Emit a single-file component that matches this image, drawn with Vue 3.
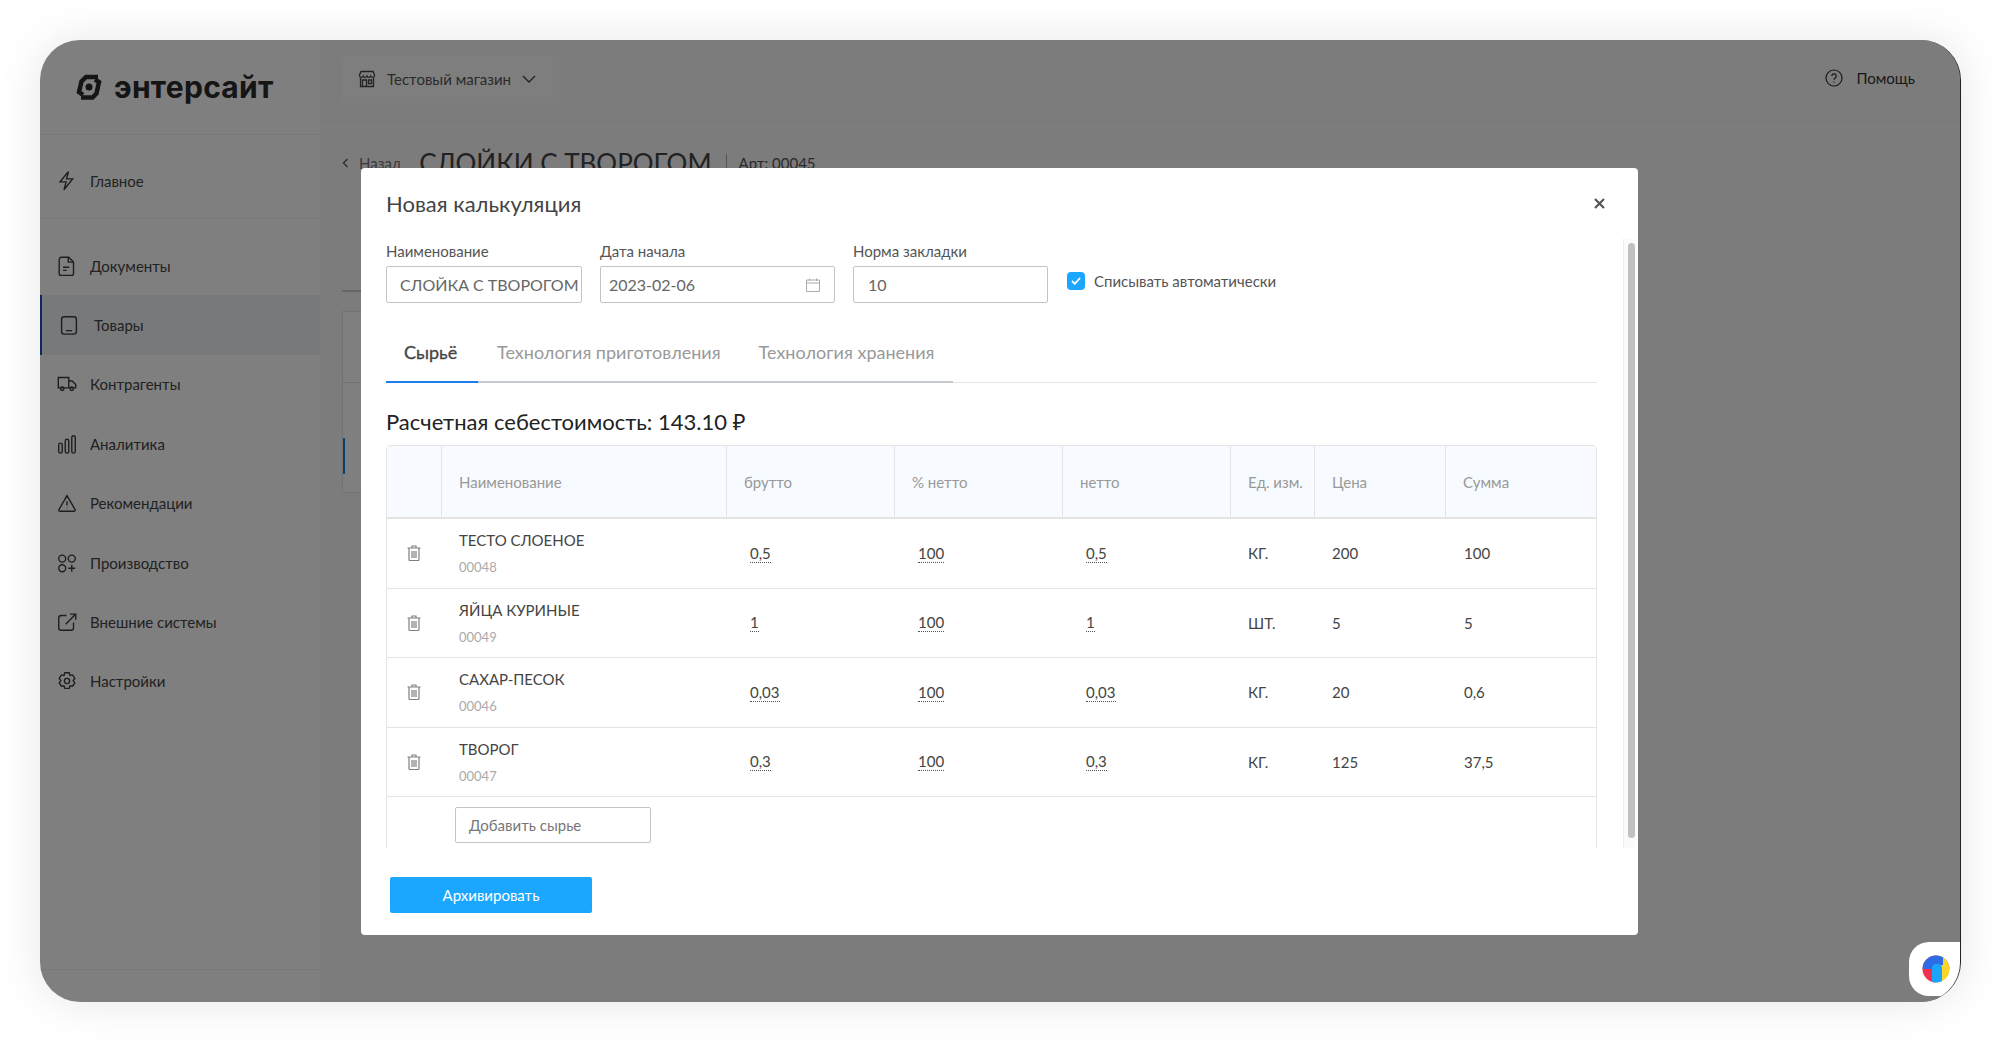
<script setup>
const menu = [
  { name: 'Главное', icon: 'bolt', group: 'first' },
  { name: 'Документы', icon: 'doc' },
  { name: 'Товары', icon: 'goods', active: true },
  { name: 'Контрагенты', icon: 'truck' },
  { name: 'Аналитика', icon: 'bars' },
  { name: 'Рекомендации', icon: 'warn' },
  { name: 'Производство', icon: 'prod' },
  { name: 'Внешние системы', icon: 'ext' },
  { name: 'Настройки', icon: 'gear' },
];

const icons = {
  bolt: 'M12.5 1.5 3.5 12.5h7l-2.5 9 10-12.5h-7l2-7.5z',
  doc: 'M5 1.5h8.5l5.5 5.5v13a2.5 2.5 0 0 1-2.500 2.500H5A2.500 2.500 0 0 1 2.500 20V4A2.500 2.500 0 0 1 5 1.500zM13 1.500V7h6M7 13h7M7 16.500h4',
  goods: 'M6 2h11a3 3 0 0 1 3 3v14a3 3 0 0 1-3 3H6a3 3 0 0 1-3-3V5a3 3 0 0 1 3-3zM8 18h7',
  truck: 'M1.500 4h12v12h-12zM13.500 8h4l4 4v4h-8M6 19a2 2 0 1 0 0-4 2 2 0 0 0 0 4zM17 19a2 2 0 1 0 0-4 2 2 0 0 0 0 4z',
  bars: 'M2 12.500a2 2 0 0 1 4 0V20a2 2 0 0 1-4 0zM9.500 8a2 2 0 0 1 4 0v12a2 2 0 0 1-4 0zM17 4a2 2 0 0 1 4 0v16a2 2 0 0 1-4 0z',
  warn: 'M11.500 3 2 19.500a1.500 1.500 0 0 0 1.300 1.500h16.400a1.500 1.500 0 0 0 1.300-1.500L11.500 3zM11.500 9.500v5M11.500 17v.5',
  prod: 'M6 2.500a4 4 0 1 0 0 8 4 4 0 0 0 0-8zM17 2.500a4 4 0 1 0 0 8 4 4 0 0 0 0-8zM6 13.500a4 4 0 1 0 0 8 4 4 0 0 0 0-8zM17 13.500v8M13 17.500h8',
  ext: 'M11 4H5a3 3 0 0 0-3 3v11a3 3 0 0 0 3 3h11a3 3 0 0 0 3-3v-6M10 14 21 3M15 2.500h6.500V9',
  gear: 'M9 2h5l1 3 3-.5 2.500 4-2 2.500 2 2.500-2.500 4-3-.5-1 3H9l-1-3-3 .5-2.500-4 2-2.500-2-2.500 2.500-4 3 .5zM11.500 8.500a3 3 0 1 0 0 6 3 3 0 0 0 0-6z',
};

const columns = ['', 'Наименование', 'брутто', '% нетто', 'нетто', 'Ед. изм.', 'Цена', 'Сумма'];

const rows = [
  { name: 'ТЕСТО СЛОЕНОЕ', code: '00048', brutto: '0,5', percent: '100', netto: '0,5', unit: 'КГ.', price: '200', sum: '100' },
  { name: 'ЯЙЦА КУРИНЫЕ', code: '00049', brutto: '1', percent: '100', netto: '1', unit: 'ШТ.', price: '5', sum: '5' },
  { name: 'САХАР-ПЕСОК', code: '00046', brutto: '0,03', percent: '100', netto: '0,03', unit: 'КГ.', price: '20', sum: '0,6' },
  { name: 'ТВОРОГ', code: '00047', brutto: '0,3', percent: '100', netto: '0,3', unit: 'КГ.', price: '125', sum: '37,5' },
];
</script>

<template>
  <div class="window">
    <aside class="sidebar">
      <div class="logo">
        <svg width="28" height="28" viewBox="0 0 28 28" fill="none">
          <path d="M23 4H11L6.500 8.500 4 19l4 3" stroke="#2b2b2b" stroke-width="4.500" />
          <path d="M6 24.500h11.500l4-4L24 9l-4-2.500" stroke="#2b2b2b" stroke-width="4.500" />
          <circle cx="14" cy="14" r="3.500" fill="#2b2b2b" />
        </svg>
        <span>энтерсайт</span>
      </div>
      <nav class="menu">
        <a v-for="item in menu" :key="item.name" class="menu-item" :class="{ active: item.active, first: item.group }">
          <svg width="20" height="20" viewBox="0 0 23 23" fill="none" stroke="#3c3c3c" stroke-width="1.600">
            <path :d="icons[item.icon]" />
          </svg>
          <span>{{ item.name }}</span>
        </a>
      </nav>
      <div class="side-foot"></div>
    </aside>

    <main class="main">
      <header class="top">
        <div class="shop">
          <svg width="18" height="18" viewBox="0 0 18 18" fill="none" stroke="#444" stroke-width="1.300">
            <path d="M2.500 7v9.500h13V7M1.500 5l1.500-3.500h12L16.500 5v1a2 2 0 0 1-3.750 0 2 2 0 0 1-3.750 0 2 2 0 0 1-3.750 0 2 2 0 0 1-3.750 0zM4.500 10h4v6.500h-4zM10.500 10h3v3.500h-3z" />
          </svg>
          <span>Тестовый магазин</span>
          <svg width="14" height="8" viewBox="0 0 14 8" fill="none" stroke="#444" stroke-width="1.400"><path d="m1 1 6 6 6-6" /></svg>
        </div>
        <div class="help">
          <svg width="18" height="18" viewBox="0 0 18 18" fill="none" stroke="#333" stroke-width="1.200">
            <circle cx="9" cy="9" r="8" />
            <path d="M6.800 7a2.200 2.200 0 1 1 3.400 1.900c-.8.500-1.200 1-1.200 1.900M9 12.600v.8" />
          </svg>
          <span>Помощь</span>
        </div>
      </header>
      <div class="content">
        <div class="crumbs">
          <svg width="7" height="10" viewBox="0 0 7 10" fill="none" stroke="#555" stroke-width="1.300"><path d="M5.500 1 1.500 5l4 4" /></svg>
          <span class="back">Назад</span>
          <span class="page-title">СЛОЙКИ С ТВОРОГОМ</span>
          <span class="art">Арт: 00045</span>
        </div>
        <div class="page-rule"></div>
        <div class="page-card">
          <div class="page-row"></div>
          <div class="page-row selected"><i></i></div>
        </div>
      </div>
    </main>

    <div class="overlay">
      <section class="modal">
        <div class="modal-head">
          <h2>Новая калькуляция</h2>
          <svg width="11" height="11" viewBox="0 0 11 11" fill="none" stroke="#555" stroke-width="2.200"><path d="m1 1 9 9M10 1l-9 9" /></svg>
        </div>
        <div class="modal-body">
          <div class="scroll">
            <div class="form">
              <label class="field name">
                <span>Наименование</span>
                <div class="input center">СЛОЙКА С ТВОРОГОМ</div>
              </label>
              <label class="field date">
                <span>Дата начала</span>
                <div class="input">
                  2023-02-06
                  <svg width="16" height="14" viewBox="0 0 16 14" fill="none" stroke="#aaa" stroke-width="1"><path d="M1.500 2h13v11.500h-13zM1.500 5h13M4.500 .5v2.500M11.500 .5v2.500" /></svg>
                </div>
              </label>
              <label class="field norm">
                <span>Норма закладки</span>
                <div class="input">10</div>
              </label>
              <div class="check">
                <i>
                  <svg width="10" height="8" viewBox="0 0 10 8" fill="none" stroke="#fff" stroke-width="1.800"><path d="m1 4 2.800 2.800L9 1" /></svg>
                </i>
                <span>Списывать автоматически</span>
              </div>
            </div>

            <div class="tabs">
              <span class="tab active">Сырьё</span>
              <span class="tab">Технология приготовления</span>
              <span class="tab">Технология хранения</span>
            </div>

            <div class="cost">Расчетная себестоимость: 143.10 ₽</div>

            <div class="grid">
              <div class="row head">
                <div v-for="col in columns" :key="col" class="cell" :class="{ narrow: col === 'Ед. изм.' }">{{ col }}</div>
              </div>
              <div v-for="row in rows" :key="row.code" class="row">
                <div class="cell trash">
                  <svg width="14" height="16" viewBox="0 0 14 16" fill="none" stroke="#808080" stroke-width="1.200">
                    <path d="M.5 3h13M5 3V1h4v2M2 3v11.500A1 1 0 0 0 3 15.500h8a1 1 0 0 0 1-1V3M5 6v7M7 6v7M9 6v7" />
                  </svg>
                </div>
                <div class="cell title">
                  <span>{{ row.name }}</span>
                  <small>{{ row.code }}</small>
                </div>
                <div class="cell"><span class="edit">{{ row.brutto }}</span></div>
                <div class="cell"><span class="edit">{{ row.percent }}</span></div>
                <div class="cell"><span class="edit">{{ row.netto }}</span></div>
                <div class="cell">{{ row.unit }}</div>
                <div class="cell">{{ row.price }}</div>
                <div class="cell">{{ row.sum }}</div>
              </div>
              <div class="add">
                <div class="add-input">Добавить сырье</div>
              </div>
            </div>
          </div>
          <div class="scrollbar"><i></i></div>
        </div>
        <div class="modal-foot">
          <button>Архивировать</button>
        </div>
      </section>
    </div>

    <div class="widget">
      <svg width="28" height="28" viewBox="0 0 28 28">
        <defs><clipPath id="ball"><circle cx="14" cy="14" r="13.500" /></clipPath></defs>
        <g clip-path="url(#ball)">
          <rect width="14" height="28" fill="#f0304f" />
          <rect width="28" height="14" fill="#2f6be4" />
          <rect x="14" width="14" height="28" fill="#ffd42a" />
          <rect x="14" width="7" height="10" fill="#2f6be4" />
          <rect x="10" y="9" width="10" height="20" rx="4" fill="#19a4ff" />
        </g>
      </svg>
    </div>
  </div>
</template>

<style scoped>
.window {
  position: relative;
  display: flex;
  width: 1920px;
  height: 962px;
  margin: 40px;
  overflow: hidden;
  border-right: 1px solid #222;
  border-radius: 40px;
  background: #f8f8f8;
  box-shadow: 0 0 45px rgba(0, 0, 0, 0.1);
  font-family: Lato, "Noto Sans", sans-serif;
  color: #3c3c3c;
}
.sidebar {
  display: flex;
  flex-direction: column;
  flex: 0 0 280px;
  background: #fff;
}
.logo {
  display: flex;
  align-items: center;
  gap: 11px;
  height: 95px;
  padding-left: 35px;
  border-bottom: 1px solid #f1f1f1;
  box-sizing: border-box;
}
.logo span {
  font-family: Inter, sans-serif;
  font-weight: 700;
  font-size: 30px;
  letter-spacing: 0.3px;
  color: #2b2b2b;
}
.menu {
  flex: 1;
  padding-top: 16px;
}
.menu-item {
  display: flex;
  align-items: center;
  gap: 13px;
  height: 59.4px;
  padding-left: 17px;
  font-size: 15px;
  color: #444;
}
.menu-item.first {
  height: 60px;
  margin-bottom: 25px;
  position: relative;
}
.menu-item.first::after {
  content: "";
  position: absolute;
  left: 0;
  right: 0;
  bottom: -8px;
  border-bottom: 1px solid #f1f1f1;
}
.menu-item.active {
  padding-left: 17px;
  gap: 15px;
  border-left: 2px solid #1a4fc0;
  background: #f0f2f6;
  box-sizing: border-box;
}
.side-foot {
  height: 32px;
  border-top: 1px solid #f1f1f1;
}
.main {
  flex: 1;
  display: flex;
  flex-direction: column;
}
.top {
  display: flex;
  align-items: center;
  justify-content: space-between;
  flex: 0 0 82px;
  padding: 0 45px 6px 22px;
  border-bottom: 1px solid #f1f1f1;
  box-sizing: border-box;
}
.shop {
  display: flex;
  align-items: center;
  gap: 11px;
  width: 217px;
  height: 47px;
  padding-left: 16px;
  margin-top: 3px;
  box-sizing: border-box;
  border-radius: 4px;
  background: #fdfdfd;
  font-size: 15px;
  color: #555;
}
.help {
  display: flex;
  align-items: center;
  gap: 13px;
  font-size: 15px;
  color: #333;
}
.content {
  padding: 27px 0 0 22px;
}
.crumbs {
  display: flex;
  align-items: center;
  height: 28px;
  font-size: 15px;
  color: #777;
}
.back {
  margin-left: 10px;
}
.page-title {
  margin-left: 18px;
  font-size: 26px;
  color: #444;
}
.art {
  margin-left: 14px;
  padding-left: 12px;
  border-left: 1px solid #aaa;
  font-size: 15px;
  color: #555;
}
.page-rule {
  width: 100px;
  margin-top: 113px;
  border-top: 2px solid #ccc;
}
.page-card {
  width: 100px;
  height: 182px;
  margin-top: 19px;
  border: 1px solid #e4e4e4;
  box-sizing: border-box;
  background: #fff;
}
.page-row {
  height: 70px;
  border-bottom: 1px solid #e4e4e4;
}
.page-row.selected {
  height: 55px;
  margin-top: 55px;
  border-bottom: 0;
}
.page-row.selected i {
  display: block;
  width: 2px;
  height: 36px;
  margin-left: 0;
  background: #1b7fd0;
}
.overlay {
  position: absolute;
  inset: 0;
  padding: 128px 0 0 321px;
  background: rgba(0, 0, 0, 0.5);
}
.modal {
  display: flex;
  flex-direction: column;
  width: 1277px;
  height: 767px;
  border-radius: 4px;
  background: #fff;
}
.modal-head {
  display: flex;
  align-items: center;
  justify-content: space-between;
  flex: 0 0 71px;
  padding: 0 33px 0 25px;
  box-sizing: border-box;
}
.modal-head h2 {
  margin: 0;
  font-size: 22px;
  font-weight: 400;
  color: #444;
}
.modal-body {
  display: flex;
  height: 609px;
  overflow: hidden;
}
.scroll {
  width: 1211px;
  margin-left: 25px;
}
.form {
  display: flex;
  align-items: flex-start;
  padding-top: 3px;
}
.field {
  display: flex;
  flex-direction: column;
  font-size: 15px;
  color: #555;
}
.field > span {
  height: 24px;
  line-height: 18px;
}
.input {
  display: flex;
  align-items: center;
  justify-content: space-between;
  height: 37px;
  padding: 0 13px 0 8px;
  border: 1px solid #c4c4c4;
  border-radius: 2px;
  box-sizing: border-box;
  font-size: 16px;
  color: #666;
}
.input.center {
  padding: 0 0 0 13px;
  white-space: nowrap;
}
.name {
  width: 196px;
  margin-right: 18px;
}
.date {
  width: 235px;
  margin-right: 18px;
}
.norm {
  width: 195px;
  margin-right: 19px;
}
.norm .input {
  padding-left: 14px;
}
.check {
  display: flex;
  align-items: center;
  gap: 9px;
  margin-top: 30px;
  font-size: 15px;
  color: #555;
}
.check i {
  display: flex;
  align-items: center;
  justify-content: center;
  width: 18px;
  height: 18px;
  border-radius: 4px;
  background: #1ba7ff;
}
.tabs {
  display: flex;
  height: 60px;
  margin-top: 20px;
  border-bottom: 1px solid #e4e4e4;
  box-sizing: border-box;
}
.tab {
  display: flex;
  align-items: center;
  padding: 0 19px;
  border-bottom: 2px solid #c4c8cf;
  margin-bottom: -1px;
  height: 60px;
  box-sizing: border-box;
  font-size: 18px;
  color: #999;
}
.tab.active {
  width: 92px;
  padding: 0 18px;
  border-bottom-color: #1b7cf0;
  color: #444;
  -webkit-text-stroke: 0.3px #444;
}
.cost {
  margin-top: 23px;
  height: 39px;
  line-height: 32px;
  font-size: 22px;
  color: #222;
}
.grid {
  border: 1px solid #e4e4e4;
  border-radius: 4px 4px 0 0;
  font-size: 15px;
  color: #444;
}
.row {
  display: grid;
  grid-template-columns: 55px 285px 168px 168px 168px 84px 131px 1fr;
  height: 69.5px;
  border-bottom: 1px solid #e4e4e4;
  box-sizing: border-box;
}
.row.head {
  height: 73px;
  border-bottom-width: 2px;
  background: #f7fafe;
  color: #999;
}
.row.head .cell {
  padding-left: 17px;
  border-right: 1px solid #e4e4e4;
}
.row.head .cell.narrow {
  line-height: 18px;
}
.row.head .cell:last-child {
  border-right: 0;
}
.cell {
  display: flex;
  align-items: center;
  padding-left: 17px;
}
.row:not(.head) .cell:nth-child(n + 3):nth-child(-n + 5) {
  padding-left: 23px;
}
.row:not(.head) .cell:last-child {
  padding-left: 18px;
}
.row .trash {
  padding-left: 20px;
}
.title {
  flex-direction: column;
  align-items: flex-start;
  justify-content: center;
  gap: 10px;
}
.title small {
  font-size: 13px;
  color: #aaa;
}
.edit {
  border-bottom: 1px dotted #555;
  line-height: 18px;
}
.add {
  height: 70px;
  padding: 10px 0 0 68px;
}
.add-input {
  display: flex;
  align-items: center;
  width: 196px;
  height: 36px;
  padding-left: 13px;
  border: 1px solid #c4c4c4;
  border-radius: 2px;
  box-sizing: border-box;
  color: #777;
}
.scrollbar {
  width: 13px;
  margin-left: 26px;
  padding: 4px 1px 10px 4px;
  border-left: 1px solid #eee;
  box-sizing: border-box;
  background: #fbfbfb;
}
.scrollbar i {
  display: block;
  height: 100%;
  border-radius: 4px;
  background: #c1c1c1;
}
.modal-foot {
  padding: 29px 0 0 29px;
}
.modal-foot button {
  width: 202px;
  height: 36px;
  border: 0;
  border-radius: 2px;
  background: #1ba7ff;
  font-family: inherit;
  font-size: 15px;
  color: #fff;
}
.widget {
  position: absolute;
  right: 0;
  bottom: 6px;
  display: flex;
  align-items: center;
  justify-content: flex-start;
  width: 51px;
  height: 54px;
  padding-left: 13px;
  box-sizing: border-box;
  border-radius: 20px 0 20px 20px;
  background: #fff;
}
</style>

<style>
html,
body {
  height: 1042px;
  overflow: hidden;
  background: #fff;
}
</style>
